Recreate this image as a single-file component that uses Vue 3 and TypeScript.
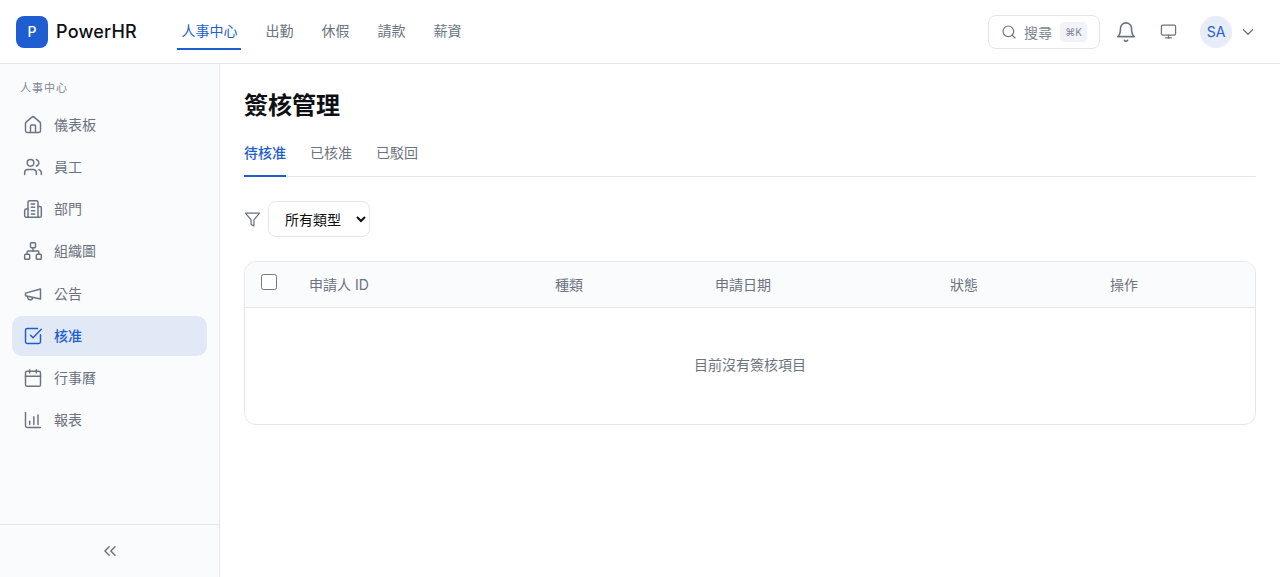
<template>
  <div class="app">
    <header class="topbar">
      <div class="brand">
        <div class="logo">P</div>
        <span class="brand-name">PowerHR</span>
      </div>
      <nav class="topnav">
        <a v-for="(n, i) in topNav" :key="n" class="topnav-item" :class="{ active: i === 0 }">{{ n }}</a>
      </nav>
      <div class="top-right">
        <div class="search">
          <svg width="16" height="16" viewBox="0 0 24 24" class="ico"><circle cx="11" cy="11" r="8" /><path d="m21 21-4.3-4.3" /></svg>
          <span class="search-text">搜尋</span>
          <kbd class="kbd">⌘K</kbd>
        </div>
        <button class="icon-btn bell">
          <svg width="22" height="22" viewBox="0 0 24 24" class="ico"><path d="M6 8a6 6 0 0 1 12 0c0 7 3 9 3 9H3s3-2 3-9" /><path d="M10.3 21a1.94 1.94 0 0 0 3.4 0" /></svg>
        </button>
        <button class="icon-btn monitor">
          <svg width="17" height="17" viewBox="0 0 24 24" class="ico"><rect x="2" y="3" width="20" height="14" rx="2" /><path d="M8 21h8" /><path d="M12 17v4" /></svg>
        </button>
        <div class="user">
          <div class="avatar">SA</div>
          <svg width="18" height="18" viewBox="0 0 24 24" class="ico"><path d="m6 9 6 6 6-6" /></svg>
        </div>
      </div>
    </header>
    <div class="body">
      <aside class="sidebar">
        <div class="side-scroll">
          <div class="side-label">人事中心</div>
          <a v-for="item in sideItems" :key="item.label" class="side-item" :class="{ active: item.active }">
            <svg width="20" height="20" viewBox="0 0 24 24" class="ico">
              <path v-for="d in item.paths" :key="d" :d="d" />
            </svg>
            <span class="side-text">{{ item.label }}</span>
          </a>
        </div>
        <div class="side-foot">
          <svg width="20" height="20" viewBox="0 0 24 24" class="ico"><path d="m11 17-5-5 5-5" /><path d="m18 17-5-5 5-5" /></svg>
        </div>
      </aside>
      <main class="main">
        <h1 class="title">簽核管理</h1>
        <div class="tabs">
          <a v-for="(t, i) in tabs" :key="t" class="tab" :class="{ active: i === 0 }">{{ t }}</a>
        </div>
        <div class="filters">
          <svg width="17" height="17" viewBox="0 0 24 24" class="ico"><path d="M22 3H2l8 9.46V19l4 2v-8.54L22 3z" /></svg>
          <select class="select">
            <option>所有類型</option>
          </select>
        </div>
        <div class="table-wrap">
          <table class="table">
            <thead>
              <tr>
                <th class="c-check"><input type="checkbox" class="check" /></th>
                <th class="c-id">申請人 ID</th>
                <th class="c-type">種類</th>
                <th class="c-date">申請日期</th>
                <th class="c-status">狀態</th>
                <th>操作</th>
              </tr>
            </thead>
            <tbody>
              <tr>
                <td colspan="6" class="empty">目前沒有簽核項目</td>
              </tr>
            </tbody>
          </table>
        </div>
      </main>
    </div>
  </div>
</template>

<script setup lang="ts">
interface SideItem {
  label: string
  paths: string[]
  active?: boolean
}

const topNav = ['人事中心', '出勤', '休假', '請款', '薪資']
const tabs = ['待核准', '已核准', '已駁回']

const sideItems: SideItem[] = [
  {
    label: '儀表板',
    paths: [
      'M15 21v-8a1 1 0 0 0-1-1h-4a1 1 0 0 0-1 1v8',
      'M3 10a2 2 0 0 1 .7-1.5l7-6a2 2 0 0 1 2.6 0l7 6A2 2 0 0 1 21 10v9a2 2 0 0 1-2 2H5a2 2 0 0 1-2-2z'
    ]
  },
  {
    label: '員工',
    paths: [
      'M16 21v-2a4 4 0 0 0-4-4H6a4 4 0 0 0-4 4v2',
      'M13 7a4 4 0 1 1-8 0 4 4 0 0 1 8 0',
      'M22 21v-2a4 4 0 0 0-3-3.87',
      'M16 3.13a4 4 0 0 1 0 7.75'
    ]
  },
  {
    label: '部門',
    paths: [
      'M6 22V4a2 2 0 0 1 2-2h8a2 2 0 0 1 2 2v18z',
      'M6 12H4a2 2 0 0 0-2 2v6a2 2 0 0 0 2 2h2',
      'M18 9h2a2 2 0 0 1 2 2v9a2 2 0 0 1-2 2h-2',
      'M10 6h4',
      'M10 10h4',
      'M10 14h4',
      'M10 18h4'
    ]
  },
  {
    label: '組織圖',
    paths: [
      'M10 2h4a1 1 0 0 1 1 1v4a1 1 0 0 1-1 1h-4a1 1 0 0 1-1-1V3a1 1 0 0 1 1-1z',
      'M3 16h4a1 1 0 0 1 1 1v4a1 1 0 0 1-1 1H3a1 1 0 0 1-1-1v-4a1 1 0 0 1 1-1z',
      'M17 16h4a1 1 0 0 1 1 1v4a1 1 0 0 1-1 1h-4a1 1 0 0 1-1-1v-4a1 1 0 0 1 1-1z',
      'M5 16v-3a1 1 0 0 1 1-1h12a1 1 0 0 1 1 1v3',
      'M12 12V8'
    ]
  },
  {
    label: '公告',
    paths: [
      'm3 11 18-5v12L3 14v-3z',
      'M11.6 16.8a3 3 0 1 1-5.8-1.6'
    ]
  },
  {
    label: '核准',
    active: true,
    paths: [
      'M21 10.5V19a2 2 0 0 1-2 2H5a2 2 0 0 1-2-2V5a2 2 0 0 1 2-2h12.5',
      'm9 11 3 3L22 4'
    ]
  },
  {
    label: '行事曆',
    paths: [
      'M8 2v4',
      'M16 2v4',
      'M5 4h14a2 2 0 0 1 2 2v14a2 2 0 0 1-2 2H5a2 2 0 0 1-2-2V6a2 2 0 0 1 2-2z',
      'M3 10h18'
    ]
  },
  {
    label: '報表',
    paths: [
      'M3 3v16a2 2 0 0 0 2 2h16',
      'M8 17.5v-4',
      'M13 17.5V8',
      'M18 17.5V6'
    ]
  }
]
</script>

<style>
html,
body {
  margin: 0;
  background: #fff;
}
</style>

<style scoped>
.app {
  height: 577px;
  display: flex;
  flex-direction: column;
  overflow: hidden;
  font-family: Inter, "Noto Sans CJK TC", sans-serif;
  color: #0d0f14;
  background: #fff;
}
.ico {
  fill: none;
  stroke: currentColor;
  stroke-width: 1.75;
  stroke-linecap: round;
  stroke-linejoin: round;
  flex: none;
  display: block;
}

/* top bar */
.topbar {
  height: 64px;
  box-sizing: border-box;
  border-bottom: 1px solid #e4e6eb;
  display: flex;
  align-items: center;
  padding: 0 23px 0 16px;
  flex: none;
}
.brand {
  display: flex;
  align-items: center;
  gap: 8px;
  width: 161px;
}
.logo {
  width: 32px;
  height: 32px;
  border-radius: 8px;
  background: #1f5ed1;
  color: #fff;
  font-size: 14px;
  font-weight: 500;
  display: flex;
  align-items: center;
  justify-content: center;
}
.brand-name {
  font-size: 18px;
  font-weight: 550;
  letter-spacing: 0.2px;
}
.topnav {
  display: flex;
  align-items: center;
  gap: 20px;
  height: 36px;
}
.topnav-item {
  font-size: 14px;
  color: #6b7280;
  padding: 0 3.5px 0 4.5px;
  height: 36px;
  line-height: 34px;
  box-sizing: border-box;
}
.topnav-item.active {
  color: #1f5ed1;
  border-bottom: 2px solid #1f5ed1;
}
.top-right {
  margin-left: auto;
  display: flex;
  align-items: center;
  color: #6b7280;
}
.search {
  width: 112px;
  height: 34px;
  box-sizing: border-box;
  border: 1px solid #e4e6eb;
  border-radius: 8px;
  display: flex;
  align-items: center;
  padding: 0 12px;
  gap: 7px;
}
.search-text {
  font-size: 14px;
  color: #80858f;
}
.kbd {
  margin-left: auto;
  background: #f1f3f8;
  border-radius: 4px;
  font-size: 10px;
  font-family: Inter, "DejaVu Sans", sans-serif;
  padding: 0 5px;
  height: 20px;
  line-height: 20px;
  color: #80858f;
}
.icon-btn {
  border: none;
  background: none;
  padding: 0;
  color: inherit;
  display: flex;
  align-items: center;
  justify-content: center;
  width: 36px;
  height: 36px;
}
.bell {
  margin-left: 8px;
}
.monitor {
  margin-left: 6px;
}
.user {
  margin-left: 14px;
  display: flex;
  align-items: center;
  gap: 7px;
}
.avatar {
  width: 32px;
  height: 32px;
  border-radius: 50%;
  background: #e6ecf8;
  color: #1f5ed1;
  font-size: 14px;
  display: flex;
  align-items: center;
  justify-content: center;
}

/* sidebar */
.body {
  flex: 1;
  min-height: 0;
  display: flex;
}
.sidebar {
  width: 220px;
  box-sizing: border-box;
  flex: none;
  background: #fafbfd;
  border-right: 1px solid #e4e6eb;
  display: flex;
  flex-direction: column;
}
.side-scroll {
  flex: 1;
  padding: 16px 12px 0;
}
.side-label {
  font-size: 11px;
  letter-spacing: 1px;
  color: #80858f;
  padding: 0 8px;
  height: 16px;
  line-height: 16px;
  margin-bottom: 9px;
}
.side-item {
  height: 40px;
  width: 195px;
  box-sizing: border-box;
  border-radius: 10px;
  padding: 0 11px;
  display: flex;
  align-items: center;
  gap: 11px;
  font-size: 14px;
  color: #6b7280;
  margin-bottom: 2.15px;
}
.side-text {
  padding-bottom: 2px;
}
.side-item.active {
  background: #e2e9f6;
  color: #1f5ed1;
  font-weight: 500;
}
.side-foot {
  height: 53px;
  box-sizing: border-box;
  border-top: 1px solid #e4e6eb;
  display: flex;
  align-items: center;
  justify-content: center;
  color: #6b7280;
}

/* main */
.main {
  flex: 1;
  min-width: 0;
  padding: 24px;
}
.title {
  margin: 0;
  font-size: 24px;
  line-height: 36px;
  font-weight: 700;
}
.tabs {
  display: flex;
  gap: 24px;
  margin-top: 16px;
  border-bottom: 1px solid #e4e6eb;
}
.tab {
  font-size: 14px;
  line-height: 20px;
  color: #6b7280;
  padding: 3px 0 13px;
  margin-bottom: -1px;
}
.tab.active {
  color: #1f5ed1;
  font-weight: 500;
  border-bottom: 2px solid #1f5ed1;
  padding-bottom: 12px;
}
.filters {
  display: flex;
  align-items: center;
  gap: 7px;
  margin-top: 24px;
  color: #6b7280;
}
.select {
  height: 36px;
  width: 102px;
  padding: 0 12px;
  border: 1px solid #e4e6eb;
  border-radius: 8px;
  background: #fff;
  color: #0d0f14;
  font-size: 14px;
  font-family: inherit;
}
.table-wrap {
  margin-top: 24px;
  border: 1px solid #e4e6eb;
  border-radius: 12px;
  overflow: hidden;
}
.table {
  width: 100%;
  border-collapse: collapse;
  table-layout: fixed;
}
th {
  height: 43px;
  padding: 0 0 2px;
  background: #fafbfd;
  border-bottom: 1px solid #e4e6eb;
  text-align: left;
  font-size: 14px;
  font-weight: 400;
  color: #6b7280;
}
.c-check {
  width: 48px;
  padding-left: 16px;
}
.c-id {
  width: 246px;
}
.c-type {
  width: 160px;
}
.c-date {
  width: 235px;
}
.c-status {
  width: 160px;
}
.check {
  width: 16px;
  height: 16px;
  margin: 0 0 4px;
  display: block;
}
.empty {
  height: 116px;
  padding: 0 0 3px;
  box-sizing: border-box;
  text-align: center;
  font-size: 14px;
  color: #6b7280;
}
</style>
